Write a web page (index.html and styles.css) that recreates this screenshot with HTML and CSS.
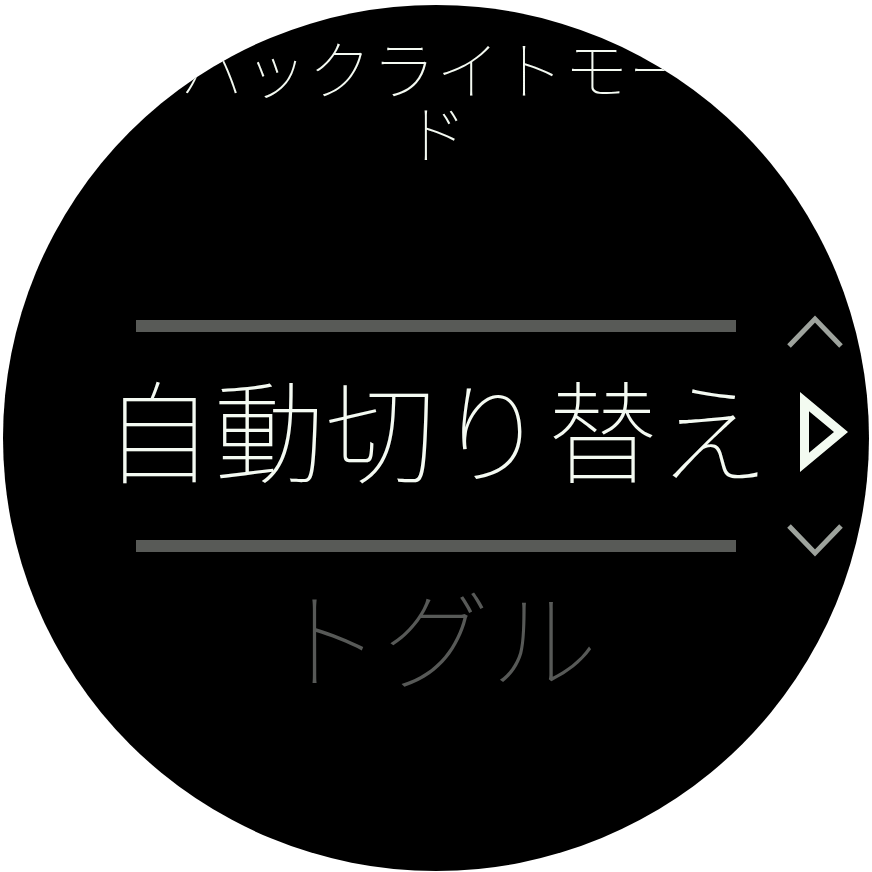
FILE: index.html
```html
<!DOCTYPE html>
<html lang="ja">
<head>
<meta charset="utf-8">
<title>バックライトモード</title>
<link rel="stylesheet" href="styles.css">
</head>
<body>
<div class="stage">
  <div class="watch">
    <div class="title">バックライトモード</div>
    <div class="picker">
      <div class="wheel">
        <div class="bar"></div>
        <div class="current"><span>自動切り替え</span></div>
        <div class="bar"></div>
        <div class="next">トグル</div>
      </div>
      <div class="arrows">
        <svg class="chev chev-up" width="58" height="34" viewBox="0 0 58 34">
          <polyline points="3,31 29,4 55,31" fill="none" stroke="#9ea39d" stroke-width="5"/>
        </svg>
        <svg class="tri" width="56" height="84" viewBox="0 0 56 84">
          <path d="M4 2 L52 42 L4 82 Z M13 21.2 L13 62.8 L38 42 Z" fill="#f3fbf1" fill-rule="evenodd"/>
        </svg>
        <svg class="chev chev-down" width="58" height="34" viewBox="0 0 58 34">
          <polyline points="3,3 29,30 55,3" fill="none" stroke="#9ea39d" stroke-width="5"/>
        </svg>
      </div>
    </div>
  </div>
</div>
</body>
</html>
```

FILE: styles.css
```css
html, body {
  margin: 0;
  padding: 0;
  background: #ffffff;
}

body {
  width: 872px;
  height: 872px;
  overflow: hidden;
  font-family: "Noto Sans CJK JP", "Noto Sans", sans-serif;
}

.stage {
  padding: 5px 0 0 3px;
}

.watch {
  width: 866px;
  height: 866px;
  border-radius: 50%;
  background: #000000;
  overflow: hidden;
  display: flex;
  flex-direction: column;
  align-items: center;
}

.title {
  margin-top: 29px;
  width: 540px;
  font-size: 64px;
  line-height: 64px;
  font-weight: 100;
  color: #f4faf2;
  text-align: center;
}

.picker {
  align-self: stretch;
  display: flex;
  padding-left: 133px;
  margin-top: 158px;
}

.wheel {
  width: 600px;
  display: flex;
  flex-direction: column;
}

.bar {
  height: 12px;
  background: #585a57;
}

.current {
  height: 188px;
  padding-bottom: 20px;
  display: flex;
  justify-content: center;
  align-items: center;
  font-size: 111px;
  line-height: 1;
  font-weight: 100;
  color: #f4faf2;
  white-space: nowrap;
}

.next {
  margin-top: 28px;
  font-size: 108px;
  line-height: 1;
  font-weight: 100;
  color: #575957;
  text-align: center;
  white-space: nowrap;
}

.arrows {
  margin-left: 50px;
  margin-top: -5px;
  display: flex;
  flex-direction: column;
  align-items: flex-start;
}

.chev {
  display: block;
}

.tri {
  display: block;
  margin-top: 41px;
  margin-left: 10px;
}

.chev-down {
  margin-top: 49px;
}
```
